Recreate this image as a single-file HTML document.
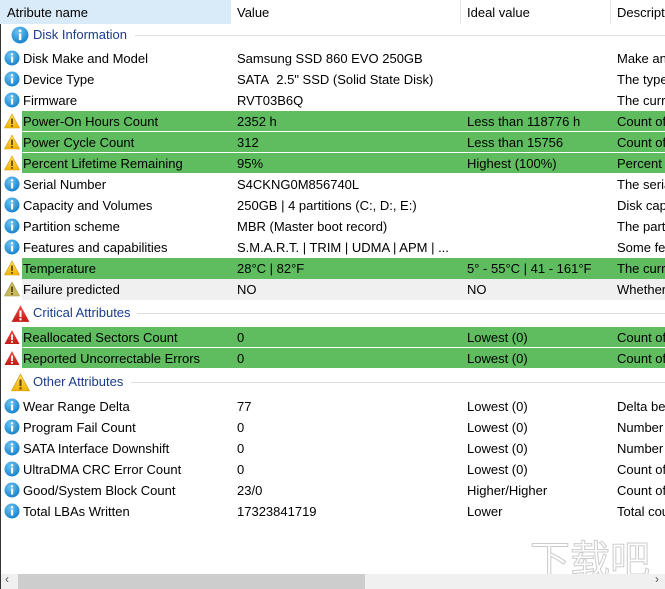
<!DOCTYPE html><html><head><style>
body{margin:0;width:665px;height:589px;overflow:hidden;background:#fff;font-family:"Liberation Sans",Arial,sans-serif;font-size:13px;color:#000;position:relative}
.a{position:absolute;white-space:nowrap}
.hd{position:absolute;top:0;left:0;width:665px;height:24px}
.r{position:absolute;left:0;width:665px;height:21px;line-height:21px;overflow:hidden;white-space:nowrap}
.g{background:#5fbd5f}
.r span{position:absolute;top:0;white-space:nowrap}
.c1{left:23px}.c2{left:237px}.c3{left:467px}.c4{left:617px}
.ic{position:absolute;left:4px;top:2px;width:16px;height:16px}
.grp{position:absolute;left:0;width:665px;height:22px;color:#1a3c8c;font-size:13px}
.grp .t{position:absolute;left:33px;top:3px;white-space:nowrap}
.grp .l{position:absolute;top:11px;height:1px;background:#ddd;right:0}
</style></head><body>
<svg width="0" height="0" style="position:absolute"><defs>
<radialGradient id="bg" cx="40%" cy="30%" r="70%"><stop offset="0" stop-color="#6fc4f2"/><stop offset="1" stop-color="#1783cc"/></radialGradient>
<linearGradient id="yg" x1="0" y1="0" x2="0" y2="1"><stop offset="0" stop-color="#ffe26a"/><stop offset="1" stop-color="#f2b300"/></linearGradient>
<linearGradient id="rg" x1="0" y1="0" x2="0" y2="1"><stop offset="0" stop-color="#f0504a"/><stop offset="1" stop-color="#c01a14"/></linearGradient>
<symbol id="i" viewBox="0 0 16 16"><circle cx="8" cy="8" r="7.5" fill="url(#bg)"/><rect x="7" y="6.5" width="2.2" height="6" fill="#fff"/><circle cx="8.1" cy="4.3" r="1.2" fill="#fff"/></symbol>
<symbol id="w" viewBox="0 0 16 16"><path d="M8 1 L15.5 15 H0.5Z" fill="url(#yg)" stroke="#d49a00" stroke-width=".6"/><rect x="7.1" y="5.5" width="1.8" height="5.5" fill="#6b4a00"/><rect x="7.1" y="12" width="1.8" height="1.8" fill="#6b4a00"/></symbol>
<symbol id="wg" viewBox="0 0 16 16"><path d="M8 1 L15.5 15 H0.5Z" fill="#c9b860" stroke="#a09040" stroke-width=".6"/><rect x="7.1" y="5.5" width="1.8" height="5.5" fill="#5a4a10"/><rect x="7.1" y="12" width="1.8" height="1.8" fill="#5a4a10"/></symbol>
<symbol id="e" viewBox="0 0 16 16"><path d="M8 1 L15.5 15 H0.5Z" fill="url(#rg)"/><rect x="7.1" y="5.5" width="1.8" height="5.5" fill="#fff"/><rect x="7.1" y="12" width="1.8" height="1.8" fill="#fff"/></symbol>
</defs></svg>
<div style="position:absolute;left:0;top:0;width:1px;height:589px;background:#333"></div>
<div class="hd">
<div class="a" style="left:0;top:0;width:231px;height:24px;background:#d9eaf8"></div>
<div class="a" style="left:7px;top:5px">Atribute name</div>
<div class="a" style="left:237px;top:5px">Value</div>
<div class="a" style="left:467px;top:5px">Ideal value</div>
<div class="a" style="left:617px;top:5px">Descript</div>
<div class="a" style="left:460px;top:0;width:1px;height:24px;background:#e5e5e5"></div>
<div class="a" style="left:610px;top:0;width:1px;height:24px;background:#e5e5e5"></div>
</div>
<div class="grp" style="top:24px"><svg style="position:absolute;left:11px;top:2px" width="18" height="18"><use href="#i"/></svg><span class="t">Disk Information</span><div class="l" style="left:135px"></div></div>

<div class="r" style="top:48px"><svg class="ic"><use href="#i"/></svg><span class="c1">Disk Make and Model</span><span class="c2">Samsung SSD 860 EVO 250GB</span><span class="c4">Make an</span></div>
<div class="r" style="top:69px"><svg class="ic"><use href="#i"/></svg><span class="c1">Device Type</span><span class="c2">SATA&nbsp; 2.5" SSD (Solid State Disk)</span><span class="c4">The type</span></div>
<div class="r" style="top:90px"><svg class="ic"><use href="#i"/></svg><span class="c1">Firmware</span><span class="c2">RVT03B6Q</span><span class="c4">The curr</span></div>
<div class="a g" style="left:22px;top:111px;width:643px;height:20px"></div>
<div class="r" style="top:111px"><svg class="ic"><use href="#w"/></svg><span class="c1">Power-On Hours Count</span><span class="c2">2352 h</span><span class="c3">Less than 118776 h</span><span class="c4">Count of</span></div>
<div class="a g" style="left:22px;top:132px;width:643px;height:20px"></div>
<div class="r" style="top:132px"><svg class="ic"><use href="#w"/></svg><span class="c1">Power Cycle Count</span><span class="c2">312</span><span class="c3">Less than 15756</span><span class="c4">Count of</span></div>
<div class="a g" style="left:22px;top:153px;width:643px;height:20px"></div>
<div class="r" style="top:153px"><svg class="ic"><use href="#w"/></svg><span class="c1">Percent Lifetime Remaining</span><span class="c2">95%</span><span class="c3">Highest (100%)</span><span class="c4">Percent</span></div>
<div class="r" style="top:174px"><svg class="ic"><use href="#i"/></svg><span class="c1">Serial Number</span><span class="c2">S4CKNG0M856740L</span><span class="c4">The seria</span></div>
<div class="r" style="top:195px"><svg class="ic"><use href="#i"/></svg><span class="c1">Capacity and Volumes</span><span class="c2">250GB | 4 partitions (C:, D:, E:)</span><span class="c4">Disk cap</span></div>
<div class="r" style="top:216px"><svg class="ic"><use href="#i"/></svg><span class="c1">Partition scheme</span><span class="c2">MBR (Master boot record)</span><span class="c4">The part</span></div>
<div class="r" style="top:237px"><svg class="ic"><use href="#i"/></svg><span class="c1">Features and capabilities</span><span class="c2">S.M.A.R.T. | TRIM | UDMA | APM | ...</span><span class="c4">Some fe</span></div>
<div class="a g" style="left:22px;top:258px;width:643px;height:21px"></div>
<div class="r" style="top:258px"><svg class="ic"><use href="#w"/></svg><span class="c1">Temperature</span><span class="c2">28°C | 82°F</span><span class="c3">5° - 55°C | 41 - 161°F</span><span class="c4">The curr</span></div>
<div class="a" style="left:22px;top:279px;width:643px;height:21px;background:#f0f0f0"></div>
<div class="r" style="top:279px"><svg class="ic"><use href="#wg"/></svg><span class="c1">Failure predicted</span><span class="c2">NO</span><span class="c3">NO</span><span class="c4">Whether</span></div>

<div class="grp" style="top:302px"><svg style="position:absolute;left:11px;top:2px" width="19" height="19"><use href="#e"/></svg><span class="t" style="top:3px">Critical Attributes</span><div class="l" style="left:137px;top:11px"></div></div>
<div class="a g" style="left:22px;top:327px;width:643px;height:20px"></div>
<div class="r" style="top:327px"><svg class="ic"><use href="#e"/></svg><span class="c1">Reallocated Sectors Count</span><span class="c2">0</span><span class="c3">Lowest (0)</span><span class="c4">Count of</span></div>
<div class="a g" style="left:22px;top:348px;width:643px;height:20px"></div>
<div class="r" style="top:348px"><svg class="ic"><use href="#e"/></svg><span class="c1">Reported Uncorrectable Errors</span><span class="c2">0</span><span class="c3">Lowest (0)</span><span class="c4">Count of</span></div>

<div class="grp" style="top:371px"><svg style="position:absolute;left:11px;top:2px" width="19" height="19"><use href="#w"/></svg><span class="t" style="top:3px">Other Attributes</span><div class="l" style="left:131px;top:11px"></div></div>
<div class="r" style="top:396px"><svg class="ic"><use href="#i"/></svg><span class="c1">Wear Range Delta</span><span class="c2">77</span><span class="c3">Lowest (0)</span><span class="c4">Delta be</span></div>
<div class="r" style="top:417px"><svg class="ic"><use href="#i"/></svg><span class="c1">Program Fail Count</span><span class="c2">0</span><span class="c3">Lowest (0)</span><span class="c4">Number</span></div>
<div class="r" style="top:438px"><svg class="ic"><use href="#i"/></svg><span class="c1">SATA Interface Downshift</span><span class="c2">0</span><span class="c3">Lowest (0)</span><span class="c4">Number</span></div>
<div class="r" style="top:459px"><svg class="ic"><use href="#i"/></svg><span class="c1">UltraDMA CRC Error Count</span><span class="c2">0</span><span class="c3">Lowest (0)</span><span class="c4">Count of</span></div>
<div class="r" style="top:480px"><svg class="ic"><use href="#i"/></svg><span class="c1">Good/System Block Count</span><span class="c2">23/0</span><span class="c3">Higher/Higher</span><span class="c4">Count of</span></div>
<div class="r" style="top:501px"><svg class="ic"><use href="#i"/></svg><span class="c1">Total LBAs Written</span><span class="c2">17323841719</span><span class="c3">Lower</span><span class="c4">Total cou</span></div>

<div class="a" style="left:530px;top:528px;font-size:40px;color:#fff;-webkit-text-stroke:1px #ccc;font-family:'Noto Sans CJK SC',sans-serif">下载吧</div>
<div class="a" style="left:1px;top:574px;width:664px;height:15px;background:#f0f0f0"></div>
<div class="a" style="left:18px;top:574px;width:347px;height:15px;background:#cdcdcd"></div>
<div class="a" style="left:5px;top:572px;font-size:12px;color:#555">‹</div>
<div class="a" style="left:655px;top:572px;font-size:12px;color:#555">›</div>
</body></html>
